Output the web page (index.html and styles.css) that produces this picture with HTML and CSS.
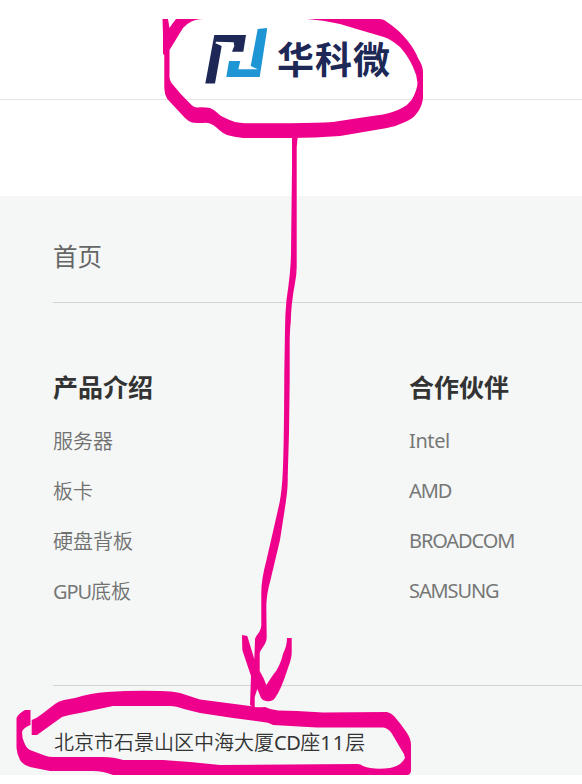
FILE: index.html
```html
<!DOCTYPE html>
<html lang="zh-CN">
<head>
    <meta charset="UTF-8">
    <meta name="viewport" content="width=device-width, initial-scale=1.0">
    <title>华科微</title>
    <link rel="stylesheet" href="styles.css">
</head>
<body>
    <header class="header">
        <a class="logo" href="#">
            <svg class="logo-mark" width="62" height="56" viewBox="205 28 62 56">
                <path fill="#1d2856" d="M214.3 35H246L243.3 51.7H232L234.3 46L233.7 42.3L216 41.8L215.5 43.2L221.7 46L215 83.5H205.3Z"/>
                <path fill="#1e96d6" d="M257.7 29L267.3 28L259.7 77H226.3L229 61H240.3L238.3 69.3H257.7L250.7 66Z"/>
            </svg>
            <span class="logo-text">华科微</span>
        </a>
    </header>

    <footer class="footer">
        <nav class="footer-nav">
            <a href="#">首页</a>
        </nav>
        <div class="footer-columns">
            <div class="column">
                <h3>产品介绍</h3>
                <ul>
                    <li>服务器</li>
                    <li>板卡</li>
                    <li>硬盘背板</li>
                    <li><span class="latin">GPU</span>底板</li>
                </ul>
            </div>
            <div class="column">
                <h3>合作伙伴</h3>
                <ul>
                    <li class="latin intel">Intel</li>
                    <li class="latin">AMD</li>
                    <li class="latin">BROADCOM</li>
                    <li class="latin">SAMSUNG</li>
                </ul>
            </div>
        </div>
        <p class="address">北京市石景山区中海大厦<span class="latin">CD</span>座<span class="number">11</span>层</p>
    </footer>

    <!-- Hand drawn marks: logo circle, arrow, address circle -->
    <svg class="marks" width="582" height="784" viewBox="0 0 582 784">
        <path fill-rule="evenodd" d="M162.5 19H168L169.5 28Q172 24 176 19H379Q384 19 387 22Q399 30 407 40Q415 50 418 58Q423 66 423 72V98Q422 107 417 113Q413 119 405 122Q397 126 387 128L340 136Q315 138 290 138H243Q234 137 227 135C220 132 217 127 213 125Q208 122 203 123Q196 123 192 122.5Q188 121 185 118L167.3 99Q164.3 94 164.3 88V55L163 54V35Z
            M203 19Q196 19 191.5 21.5Q186 24 183 28L169.5 50V75Q169 79 171.5 83Q180 94 191.5 105Q194 107 196.5 107.5Q204 107 210 108C215 110 218 114 222 116.5Q229 120 235 122Q240 123 245 123.3H290Q318 123 333 122Q358 118 383 114.5Q394 112 402 108Q408 105 411.5 100Q417 91 417.5 83Q417 75 413 67Q408 56 400 47Q391 39 383 36.7L360 30L340 24Q323 20 307 19Z"/>
        <path d="M292 136V167L291 253Q291 270 286.5 300Q285 315 285 330L284.3 373Q284 450 282.7 473Q282 490 279.5 503L266.5 560Q261.3 579 261.3 593V625C261 633 255 635 255 640L254.3 659L247.3 636L242 635L242.3 650L251 676L250 705L254.7 709V697L257.3 689L261 698Q263 701 266 701Q272 702 275 698Q281 690 288 668Q291.7 658 291.7 653V638H287Q287 646 283.3 653Q280 667 273 675L266.3 685Q264 678 259.7 671V655C259 649 266.7 646 266.7 637L266.3 605Q267 592 270 582L280 540L285.7 503Q288 488 287.7 477L289 433L289.7 380V340Q290 327 290.7 323Q291 304 295 283Q296.7 274 296.7 267V147L297.7 137Z"/>
        <path fill-rule="evenodd" d="M31.7 720Q37 718 42 714L55 704Q59 701 64 700L75 698Q91 693 107 692Q135 690 160 691Q172 691 180 693L200 699.5L250 706Q257 708 265 707Q271 710 278 710.5L297 711L323 712.5L387 712Q391 713 394 716Q401 724 407 733Q411 739 411 745V770Q411 774 408 775H113Q103 771 93 771H50L30 767Q23 765 20 760Q17 754 16.5 748V718Q19 713 25 710H30.5V725Q23 728 22 732Q22 738 24 742Q26 748 30 750L46 756Q49 757 53 757H103Q114 757 123 760H163L190 762L220 765L357 764Q361 764 363 766Q373 770 390 768Q401 766 405 758Q404 753 401.5 750L391.5 733Q388 728 383 727.5L317 727.5L273 725Q268 722 263 722L233 718L200 713L184 709Q176 706 170 706H113L80 713Q68 715 62 717L37 735H31.7Z"/>
    </svg>
</body>
</html>
```

FILE: styles.css
```css
* {
    box-sizing: border-box;
}

body {
    margin: 0;
    position: relative;
    height: 784px;
    overflow: hidden;
    background-color: #fff;
    font-family: 'Noto Sans', 'Noto Sans CJK SC', sans-serif;
    color: #333;
}

.header {
    height: 100px;
    padding: 28px 0 0 205px;
    border-bottom: 1px solid #e6e6e6;
}

.logo {
    display: flex;
    gap: 10px;
    text-decoration: none;
}

.logo-mark {
    flex: none;
}

.logo-text {
    font-family: 'Noto Sans CJK SC', sans-serif;
    font-size: 37px;
    font-weight: 700;
    line-height: 60px;
    letter-spacing: 1px;
    color: #1d2856;
}

.footer {
    height: 579px;
    margin-top: 96px;
    padding-left: 53px;
    background-color: #f4f7f6;
}

.footer-nav {
    height: 107px;
    border-bottom: 1px solid #d2d4d4;
}

.footer-nav a {
    font-family: 'Noto Sans CJK SC', sans-serif;
    font-size: 24.5px;
    line-height: 120px;
    color: #666;
    text-decoration: none;
}

/* Product and partner lists */
.footer-columns {
    display: grid;
    grid-template-columns: 356px 1fr;
    height: 383px;
    padding-top: 64px;
    border-bottom: 1px solid #d2d4d4;
}

.column h3 {
    margin: 0;
    font-size: 25px;
    font-weight: 700;
    line-height: 40px;
}

.column ul {
    margin: 10px 0 0;
    padding: 0;
    list-style: none;
}

.column li {
    height: 50px;
    font-size: 20px;
    font-weight: 350;
    line-height: 50px;
    color: #707070;
}

.column .latin {
    font-weight: 400;
    line-height: 48px;
    letter-spacing: -1.1px;
    color: #777;
}

.column .intel {
    letter-spacing: -0.4px;
}

.address {
    margin: 0;
    padding-left: 1px;
    font-size: 20px;
    font-weight: 350;
    line-height: 113px;
    height: 89px;
}

.address .latin {
    font-weight: 400;
    letter-spacing: -0.5px;
}

.address .number {
    font-weight: 400;
    letter-spacing: 1px;
}

.marks {
    position: absolute;
    top: 0;
    left: 0;
    fill: #ee008c;
    pointer-events: none;
}
```
